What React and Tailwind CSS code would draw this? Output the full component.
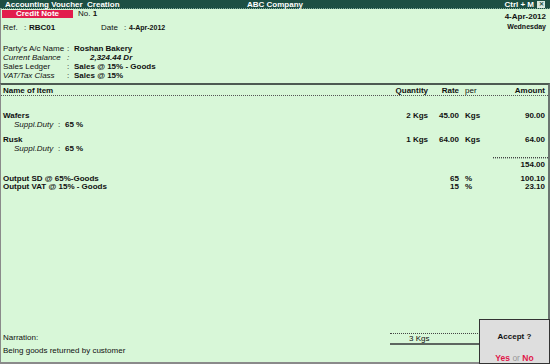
import React from "react";

const Row = ({ name, qty, rate, per, amt, className = "", nameClass = "" }) => (
  <div className={`grid grid-cols-[367px_58px_31px_31px_55px] h-[9px] leading-[9px] ${className}`}>
    <div className={nameClass}>{name}</div>
    <div className="text-right">{qty}</div>
    <div className="text-right">{rate}</div>
    <div className="pl-[6px]">{per}</div>
    <div className="text-right">{amt}</div>
  </div>
);

const Duty = () => (
  <span className="pl-[11px]">
    <span className="italic inline-block w-[44px]">Suppl.Duty</span>
    <span className="inline-block w-[7px]">:</span>
    <span className="font-bold">65 %</span>
  </span>
);

export default function App() {
  return (
    <div className="w-[550px] h-[364px] bg-[#d8f7d8] relative overflow-hidden font-['Liberation_Sans',Arial,sans-serif] text-[8px] text-[#111] flex flex-col">
      {/* Title bar */}
      <div className="h-[9px] bg-[#1d4f43] text-white font-bold grid grid-cols-3 items-center px-[5px] leading-[9px] border-b border-dotted border-[#7fa89a]">
        <div className="whitespace-pre">Accounting Voucher  Creation</div>
        <div className="text-center">ABC Company</div>
        <div className="flex justify-end items-center gap-[3px]">
          <span>Ctrl + M</span>
          <span className="w-[8px] h-[7px] bg-[#d8e8e0] text-[#1d4f43] text-[6px] leading-[7px] text-center">✕</span>
        </div>
      </div>

      {/* Header area */}
      <div className="h-[74px] flex border-l border-[#8a8a8a]">
        <div className="flex-1 flex flex-col">
          <div className="flex items-center mt-[1px] h-[8px]">
            <div className="ml-[1px] w-[71px] h-[8px] bg-[#e21d4d] text-white font-bold text-center leading-[8px]">Credit Note</div>
            <div className="ml-[5px] leading-[8px]">No. <span className="font-bold">1</span></div>
          </div>
          <div className="flex h-[9px] leading-[9px] mt-[5px]">
            <span className="ml-[2px] w-[21px]">Ref.</span>
            <span className="w-[5px]">:</span>
            <span className="font-bold w-[72px]">RBC01</span>
            <span className="w-[23px]">Date</span>
            <span className="w-[5px]">:</span>
            <span className="font-bold text-[7px]">4-Apr-2012</span>
          </div>
          <div className="mt-[12px] flex flex-col">
            <div className="flex h-[9px] leading-[9px]">
              <span className="ml-[2px] w-[64px]">Party's A/c Name</span>
              <span className="w-[7px]">:</span>
              <span className="font-bold">Roshan Bakery</span>
            </div>
            <div className="flex h-[9px] leading-[9px] italic">
              <span className="ml-[2px] w-[64px]">Current Balance</span>
              <span className="w-[7px]">:</span>
              <span className="font-bold ml-[16px]">2,324.44 Dr</span>
            </div>
            <div className="flex h-[9px] leading-[9px]">
              <span className="ml-[2px] w-[64px]">Sales Ledger</span>
              <span className="w-[7px]">:</span>
              <span className="font-bold">Sales @ 15% - Goods</span>
            </div>
            <div className="flex h-[9px] leading-[9px]">
              <span className="ml-[2px] w-[64px] italic">VAT/Tax Class</span>
              <span className="w-[7px]">:</span>
              <span className="font-bold">Sales @ 15%</span>
            </div>
          </div>
        </div>
        <div className="flex flex-col items-end pr-[4px] pt-[3px]">
          <div className="font-bold h-[9px] leading-[9px]">4-Apr-2012</div>
          <div className="font-bold text-[7px] h-[10px] leading-[10px] mt-[1px]">Wednesday</div>
        </div>
      </div>

      {/* Table area */}
      <div className="flex-1 flex flex-col border-t-2 border-[#4d5a52] border-r-2 border-r-[#6b7570] border-l border-l-[#8a8a8a] border-b-2 border-b-[#8a8a8a] pl-[2px]">
        <Row
          className="font-bold h-[11px] leading-[11px] border-b border-dotted border-[#555] -ml-[2px] pl-[2px]"
          name="Name of Item"
          qty="Quantity"
          rate="Rate"
          per={<span className="font-normal">per</span>}
          amt="Amount"
        />
        <div className="mt-[15px]">
          <Row className="font-bold" name="Wafers" qty="2 Kgs" rate="45.00" per="Kgs" amt="90.00" />
          <Row name={<Duty />} />
          <Row className="font-bold mt-[6px]" name="Rusk" qty="1 Kgs" rate="64.00" per="Kgs" amt="64.00" />
          <Row name={<Duty />} />
          <div className="flex justify-end mt-[4px]">
            <div className="w-[55px] border-t border-dotted border-[#444] border-b border-b-[#9ab09f] h-[2px]" />
          </div>
          <Row className="font-bold mt-[1px]" amt="154.00" />
          <Row className="font-bold mt-[5px]" name="Output SD @ 65%-Goods" rate="65" per="%" amt="100.10" />
          <Row className="font-bold -mt-[1px]" name="Output VAT @ 15% - Goods" rate="15" per="%" amt="23.10" />
        </div>

        <div className="mt-auto flex items-end mb-[7px]">
          <div className="flex flex-col w-[387px]">
            <div className="h-[9px] leading-[9px]">Narration:</div>
            <div className="h-[9px] leading-[9px] mt-[4px]">Being goods returned by customer</div>
          </div>
          <div className="w-[90px] mb-[10px] flex flex-col">
            <div className="border-t border-dotted border-[#444]" />
            <div className="h-[9px] leading-[9px] pl-[19px]">3 Kgs</div>
            <div className="border-t-2 border-[#5d6660]" />
          </div>
        </div>
      </div>

      {/* Accept popup */}
      <div className="absolute right-0 bottom-0 w-[71px] h-[45px] border border-[#333] bg-[#dedede] bg-[radial-gradient(#a9a9a9_0.6px,transparent_0.7px)] bg-[length:4px_4px] flex flex-col items-center">
        <div className="font-bold mt-[12px] h-[9px] leading-[9px]">Accept ?</div>
        <div className="mt-auto h-[10px] leading-[10px] text-[8.5px]">
          <span className="font-bold text-[#e0174a]">Yes</span>
          <span className="text-[#999]"> or </span>
          <span className="font-bold text-[#e0174a]">No</span>
        </div>
      </div>
    </div>
  );
}
